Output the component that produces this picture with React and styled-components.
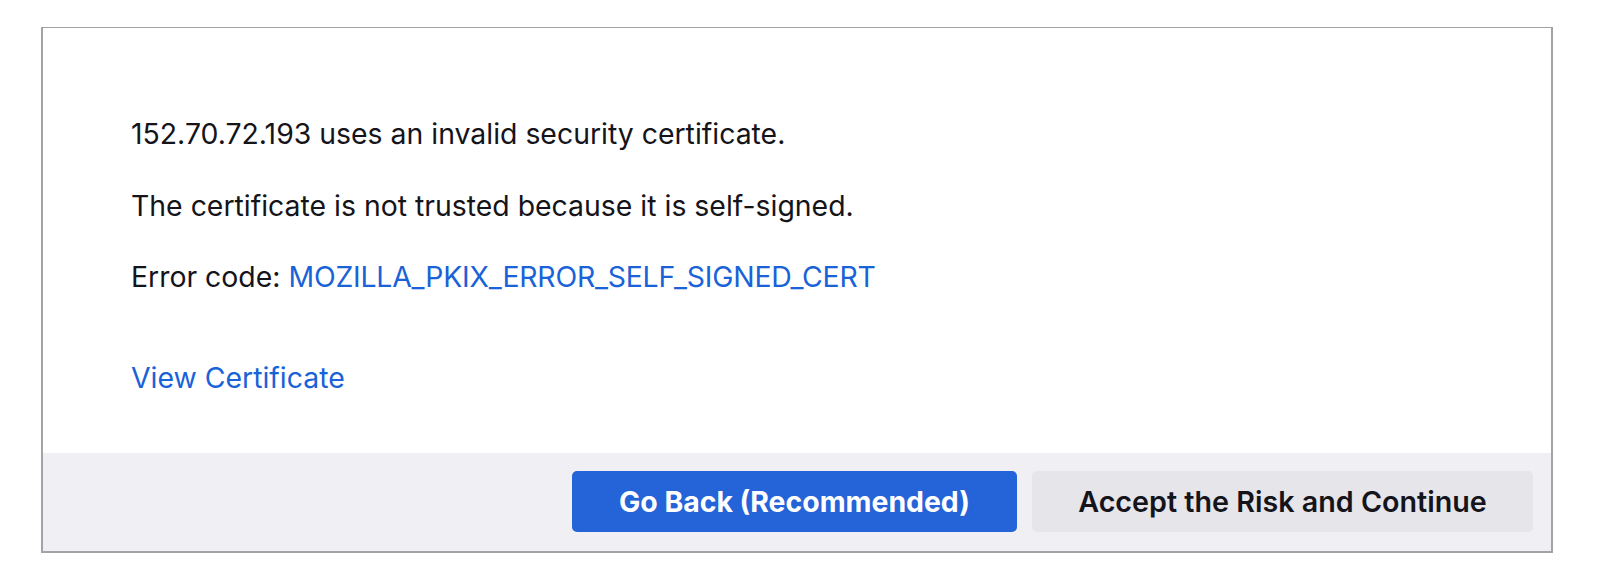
import React from "react";
import styled, { createGlobalStyle } from "styled-components";

const GlobalStyle = createGlobalStyle`
  html, body {
    margin: 0;
    padding: 0;
    background: #ffffff;
  }

  body {
    font-family: Inter, "Noto Sans", "Liberation Sans", sans-serif;
    color: #15141a;
  }
`;

const Page = styled.div`
  padding: 27px 47px 28px 41px;
`;

const Panel = styled.section`
  border: 2px solid #a3a3a5;
  border-top-width: 1px;
  background: #ffffff;
  display: flex;
  flex-direction: column;
`;

const Body = styled.div`
  padding: 86px 88px 55px;
  display: flex;
  flex-direction: column;
`;

const Text = styled.p`
  margin: 0 0 31.5px;
  font-size: 28.4px;
  line-height: 40px;
  color: #15141a;
`;

const Code = styled.a`
  color: #1a62d8;
  text-decoration: none;
  letter-spacing: -0.2px;
`;

const CertLink = styled.a`
  margin-top: 29px;
  font-size: 28.4px;
  line-height: 40px;
  color: #1a62d8;
  text-decoration: none;
  align-self: flex-start;
`;

const Footer = styled.div`
  background: #f0f0f4;
  display: flex;
  justify-content: flex-end;
  gap: 15px;
  padding: 18px 18px 19px;
`;

const Button = styled.button`
  height: 61px;
  width: ${(p) => p.$width}px;
  border: none;
  border-radius: 5px;
  font-family: Inter, "Noto Sans", "Liberation Sans", sans-serif;
  font-size: ${(p) => (p.$primary ? 28.4 : 28.7)}px;
  font-weight: ${(p) => (p.$primary ? 700 : 600)};
  color: ${(p) => (p.$primary ? "#ffffff" : "#15141a")};
  background: ${(p) => (p.$primary ? "#2563d9" : "#e5e5ea")};
  cursor: pointer;
`;

function App() {
  return (
    <>
      <GlobalStyle />
      <Page>
        <Panel>
          <Body>
            <Text>152.70.72.193 uses an invalid security certificate.</Text>
            <Text>The certificate is not trusted because it is self-signed.</Text>
            <Text>
              Error code: <Code href="#">MOZILLA_PKIX_ERROR_SELF_SIGNED_CERT</Code>
            </Text>
            <CertLink href="#">View Certificate</CertLink>
          </Body>
          <Footer>
            <Button $primary $width={445}>
              Go Back (Recommended)
            </Button>
            <Button $width={501}>Accept the Risk and Continue</Button>
          </Footer>
        </Panel>
      </Page>
    </>
  );
}

export default App;
